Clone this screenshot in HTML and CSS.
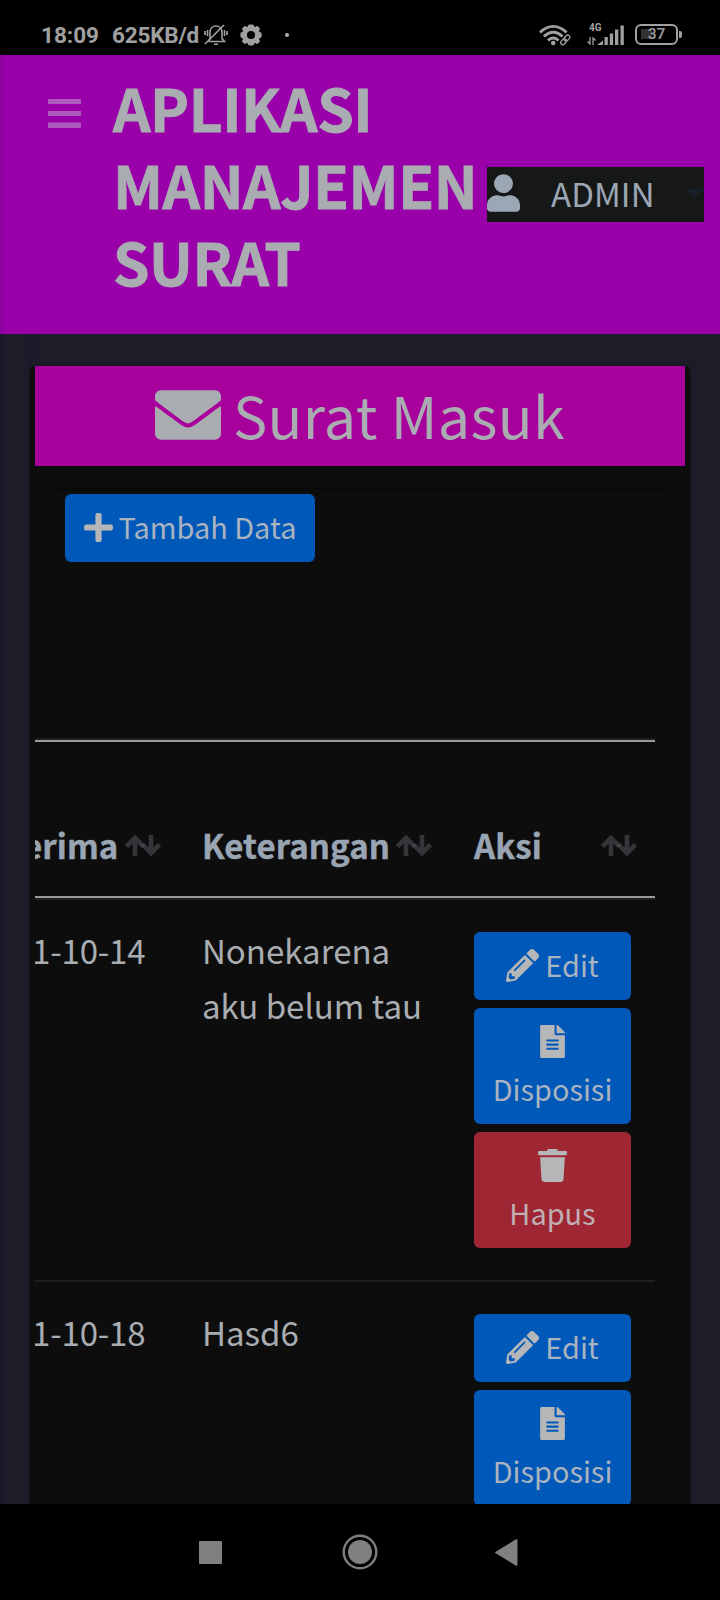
FILE: index.html
```html
<!DOCTYPE html>
<html lang="id">
<head>
<meta charset="utf-8">
<title>Aplikasi Manajemen Surat</title>
<link rel="stylesheet" href="styles.css">
</head>
<body>
<svg class="defs" aria-hidden="true">
  <symbol id="pencil" viewBox="0 0 512 512"><path d="M497.9 142.1l-46.1 46.1c-4.7 4.7-12.3 4.7-17 0l-111-111c-4.7-4.7-4.7-12.3 0-17l46.1-46.1c18.7-18.7 49.1-18.7 67.9 0l60.1 60.1c18.8 18.7 18.8 49.1 0 67.9zM284.2 99.8L21.6 362.4.4 483.9c-2.9 16.4 11.4 30.6 27.8 27.8l121.5-21.3 262.6-262.6c4.7-4.7 4.7-12.3 0-17l-111-111c-4.8-4.7-12.4-4.7-17.1 0zM124.1 339.9c-5.5-5.5-5.5-14.3 0-19.8l154-154c5.5-5.5 14.3-5.5 19.8 0s5.5 14.3 0 19.8l-154 154c-5.5 5.5-14.3 5.5-19.8 0zM88 424h48v36.3l-64.5 11.3-31.1-31.1L51.7 376H88v48z"/></symbol>
  <symbol id="file" viewBox="0 0 384 512"><path d="M224 136V0H24C10.7 0 0 10.7 0 24v464c0 13.3 10.7 24 24 24h336c13.3 0 24-10.7 24-24V160H248c-13.2 0-24-10.8-24-24zm64 236c0 6.600-5.400 12-12 12H108c-6.600 0-12-5.400-12-12v-8c0-6.600 5.400-12 12-12h168c6.600 0 12 5.400 12 12v8zm0-64c0 6.600-5.400 12-12 12H108c-6.600 0-12-5.400-12-12v-8c0-6.600 5.400-12 12-12h168c6.600 0 12 5.400 12 12v8zm0-72v8c0 6.600-5.400 12-12 12H108c-6.600 0-12-5.400-12-12v-8c0-6.600 5.400-12 12-12h168c6.600 0 12 5.400 12 12zm96-114.100v6.100H256V0h6.100c6.400 0 12.500 2.500 17 7l97.900 98c4.500 4.500 7 10.600 7 16.900z"/></symbol>
  <symbol id="trash" viewBox="0 0 448 512"><path d="M432 32H312l-9.4-18.7A24 24 0 0 0 281.100 0H166.800a23.720 23.720 0 0 0-21.400 13.300L136 32H16A16 16 0 0 0 0 48v32a16 16 0 0 0 16 16h416a16 16 0 0 0 16-16V48a16 16 0 0 0-16-16zM32 128l21.200 339a48 48 0 0 0 47.900 45h245.800a48 48 0 0 0 47.900-45L416 128z"/></symbol>
  <symbol id="sort" viewBox="0 0 36 21"><g fill="none" stroke="#333538" stroke-width="4.600"><path d="M10 21V3M1.500 11.500L10 2.800l8.500 8.700"/><path d="M26 0v18M17.500 9.500L26 18.200l8.500-8.700"/></g><circle cx="18" cy="10.500" r="1.500" fill="#4a4d51"/></symbol>
</svg>

<div class="status">
  <span class="clock">18:09</span>
  <span class="speed">625KB/d</span>
  <svg class="bell" width="24" height="24" viewBox="0 0 24 24" fill="none" stroke="#a0a0a0" stroke-width="1.600"><path d="M4.500 18.500h16l-2.500-3V9.500c0-4-2.500-6.500-6-6.500S6 5.500 6 9.500v6l-1.500 3"/><path d="M10 21.300h4M1 21L20 2"/><path d="M1 8v4M3.500 7v6M20.500 7v6M23 8v4"/></svg>
  <svg class="gear" width="22" height="22" viewBox="0 0 22 22"><circle cx="11" cy="11" r="6.600" fill="none" stroke="#a0a0a0" stroke-width="5.200"/><g stroke="#a0a0a0" stroke-width="3.600" stroke-linecap="round"><path d="M9.700 2.200h2.600M9.700 19.800h2.600M2.200 9.700v2.600M19.800 9.700v2.600M4 5l1-1M17 4l1 1M4 17l1 1M17 18l1-1"/></g></svg>
  <span class="dot"></span>
  <span class="grow"></span>
  <svg class="wifi" width="32" height="22" viewBox="0 0 32 22" fill="none" stroke="#a0a0a0" stroke-width="2.900"><path d="M1 8.500C9 .3 19.500.3 27.500 8.500"/><path d="M5 12.500c5.500-5.700 13-5.700 18.500 0"/><path d="M9 16.500c3.300-3.300 7.300-3.300 10.500 0"/><circle cx="14.200" cy="19" r="2.300" fill="#a0a0a0" stroke="none"/><g stroke-width="1.300" transform="rotate(-48 26 16)"><rect x="20.500" y="14" width="6.500" height="4.200" rx="2.100"/><rect x="25.500" y="14" width="6.500" height="4.200" rx="2.100"/></g></svg>
  <svg class="signal" width="38" height="23" viewBox="0 0 38 23"><text x="2" y="7.800" font-family="Roboto" font-weight="700" font-size="10" fill="#a0a0a0">4G</text><path d="M10 22l6-4.500V22zM17.500 14h3.300v8h-3.300zM22.800 10.500h3.300V22h-3.300zM28 6.500h3.300V22H28zM33.500 2.500h3.300V22h-3.300z" fill="#a0a0a0"/><path d="M3 14v7L.5 18.500M6 22v-7l2.500 2.500" fill="none" stroke="#a0a0a0" stroke-width="1.300"/></svg>
  <span class="battery">37</span>
</div>

<header class="topbar">
  <svg class="bars" width="33" height="30" viewBox="0 0 33 30"><path d="M1 0h31a1 1 0 0 1 1 1v4H0V1a1 1 0 0 1 1-1zM0 12h33v5H0zM0 23.500h33v4.500a1 1 0 0 1-1 1H1a1 1 0 0 1-1-1z" fill="#ad5abc"/></svg>
  <h1 class="title">APLIKASI MANAJEMEN SURAT</h1>
  <div class="user">
    <svg width="33" height="38" viewBox="0 0 448 512" fill="#9ca7b6"><path d="M224 256c70.700 0 128-57.300 128-128S294.700 0 224 0 96 57.300 96 128s57.300 128 128 128zm89.600 32h-16.700c-22.200 10.200-46.900 16-72.900 16s-50.600-5.800-72.900-16h-16.700C60.200 288 0 348.200 0 422.400V464c0 26.500 21.500 48 48 48h352c26.500 0 48-21.500 48-48v-41.600c0-74.200-60.200-134.400-134.400-134.400z"/></svg>
    <span class="username">ADMIN</span>
    <span class="caret"></span>
  </div>
</header>

<main class="page">
  <section class="card">
    <h2 class="card-title">
      <svg width="66" height="66" viewBox="0 0 512 512" fill="#a9adb1"><path d="M502.300 190.800c3.900-3.100 9.700-.2 9.700 4.700V400c0 26.500-21.500 48-48 48H48c-26.500 0-48-21.500-48-48V195.600c0-5 5.700-7.800 9.700-4.700 22.400 17.400 52.100 39.500 154.100 113.600 21.100 15.400 56.700 47.800 92.200 47.600 35.700.3 72-32.800 92.300-47.600 102-74.100 131.600-96.300 154-113.700zM256 320c23.200.4 56.600-29.200 73.400-41.400 132.700-96.300 142.800-104.700 173.400-128.700 5.800-4.500 9.200-11.500 9.200-18.900v-19c0-26.500-21.500-48-48-48H48c-26.500 0-48 21.500-48 48v19c0 7.400 3.400 14.300 9.200 18.900 30.600 23.900 40.700 32.400 173.400 128.700 16.800 12.200 50.200 41.800 73.400 41.400z"/></svg>
      <span class="card-text">Surat Masuk</span>
    </h2>
    <hr class="rule">
    <a class="btn add">
      <svg width="29" height="33" viewBox="0 0 448 512"><path d="M416 208H272V64c0-17.670-14.330-32-32-32h-32c-17.670 0-32 14.330-32 32v144H32c-17.670 0-32 14.330-32 32v32c0 17.670 14.330 32 32 32h144v144c0 17.670 14.330 32 32 32h32c17.670 0 32-14.330 32-32V304h144c17.670 0 32-14.330 32-32v-32c0-17.670-14.330-32-32-32z"/></svg>
      <span class="label-add">Tambah Data</span>
    </a>
    <div class="table">
      <div class="row head">
        <div class="cell date"><span class="cut">erima</span><svg class="sort" width="36" height="21"><use href="#sort"/></svg></div>
        <div class="cell"><span class="ket">Keterangan</span><svg class="sort" width="36" height="21"><use href="#sort"/></svg></div>
        <div class="cell"><span class="aksi">Aksi</span><svg class="sort" width="36" height="21"><use href="#sort"/></svg></div>
      </div>
      <div class="row body">
        <div class="cell date">1-10-14</div>
        <div class="cell note">Nonekarena aku belum tau</div>
        <div class="cell actions">
          <a class="btn"><svg width="33" height="33"><use href="#pencil"/></svg><span>Edit</span></a>
          <a class="btn tall"><svg width="25" height="33"><use href="#file"/></svg><span>Disposisi</span></a>
          <a class="btn tall danger"><svg width="29" height="33"><use href="#trash"/></svg><span>Hapus</span></a>
        </div>
      </div>
      <div class="row body">
        <div class="cell date">1-10-18</div>
        <div class="cell note">Hasd6</div>
        <div class="cell actions">
          <a class="btn"><svg width="33" height="33"><use href="#pencil"/></svg><span>Edit</span></a>
          <a class="btn tall"><svg width="25" height="33"><use href="#file"/></svg><span>Disposisi</span></a>
        </div>
      </div>
    </div>
  </section>
</main>

<nav class="navbar">
  <svg width="23" height="23"><rect width="23" height="23" rx="1" fill="#808080"/></svg>
  <svg width="36" height="36" viewBox="0 0 36 36"><circle cx="18" cy="18" r="16.300" fill="none" stroke="#808080" stroke-width="2.400"/><circle cx="18" cy="18" r="12" fill="#808080"/></svg>
  <svg width="23" height="27" viewBox="0 0 23 27"><path d="M21.500 1.200v24.600L1.200 13.500z" fill="#808080" stroke="#808080" stroke-width="2" stroke-linejoin="round"/></svg>
</nav>
</body>
</html>
```

FILE: styles.css
```css
* { box-sizing: border-box; }
body {
  margin: 0;
  width: 720px;
  height: 1600px;
  overflow: hidden;
  display: flex;
  flex-direction: column;
  background: #000;
  color: #a9adb1;
  font-family: "Noto Sans CJK JP", "Noto Sans", sans-serif;
}
svg { display: block; flex: none; }
.defs { position: absolute; width: 0; height: 0; }

/* status bar */
.status {
  height: 55px;
  flex: none;
  display: flex;
  align-items: center;
  padding: 14px 37px 0 41px;
  font: 700 22.500px/40px Roboto, sans-serif;
  color: #a0a0a0;
}
.clock { width: 71px; }
.speed { width: 92px; letter-spacing: -.2px; }
.gear { margin-left: 12px; }
.dot { width: 4px; height: 4px; border-radius: 2px; background: #b0b0b0; margin-left: 23px; }
.grow { flex: 1; }
.signal { margin-left: 16px; }
.battery {
  position: relative;
  width: 43px;
  height: 21px;
  margin: 0 5px 0 10px;
  border: 2.500px solid #a0a0a0;
  border-radius: 6px;
  font-size: 15.500px;
  font-weight: 500;
  line-height: 17px;
  text-align: center;
  background: linear-gradient(#333, #333) 4px 3px / 11px 10px no-repeat;
}
.battery::after {
  content: "";
  position: absolute;
  right: -6px;
  top: 5px;
  width: 3px;
  height: 7px;
  border-radius: 0 2px 2px 0;
  background: #a0a0a0;
}

/* header */
.topbar {
  height: 279px;
  flex: none;
  display: flex;
  align-items: flex-start;
  padding: 13px 0 0 48px;
  background: linear-gradient(90deg, #8a009c, #9900aa 5px);
}
.bars { margin-top: 31px; }
.title {
  margin: 0 0 0 32px;
  width: 374px;
  font-size: 58.600px;
  line-height: 77px;
  font-weight: 700;
  letter-spacing: -.45px;
  -webkit-text-stroke: .9px #a9adb1;
}
.user {
  width: 217px;
  height: 55px;
  margin-top: 99px;
  display: flex;
  align-items: center;
  background: #161817;
  color: #9ca7b6;
}
.user svg { margin-top: -3px; }
.username { margin: -2px 0 0 31px; font-size: 33px; line-height: 55px; letter-spacing: .1px; }
.caret { margin-left: auto; margin-top: -2px; border: 9px solid transparent; border-top-color: #172029; border-bottom: 0; }

/* page */
.page {
  flex: 1;
  min-height: 0;
  overflow: hidden;
  padding: 32px 30px 0;
  background: linear-gradient(90deg, #1b172a, #1e1c29 8px, #1e1c29 22px, #1c182a 30px, #1e1c29 40px);
}
.card {
  height: 1300px;
  padding: 0 5px;
  border-radius: 6px;
  background: #0d0d0d;
  box-shadow: 0 0 3px #111018;
}
.card-title {
  display: flex;
  justify-content: center;
  height: 100px;
  margin: 0;
  background: #a8009b;
  font-size: 57.500px;
  line-height: 97px;
  font-weight: 400;
}
.card-title svg { margin: 16px 12px 0 0; }
.card-text { letter-spacing: .3px; }
.rule { margin: 22px 15px 0; height: 2px; border: 0; background: #0a0a0a; }
.btn {
  display: flex;
  justify-content: center;
  height: 68px;
  padding: 8px 0 12px;
  gap: 6px;
  border-radius: 6px;
  background: #0058b8;
  color: #a9b4c0;
  font-size: 28.900px;
  line-height: 48px;
}
.btn svg { fill: #b5b6b7; margin-top: 8.500px; }
.add { width: 250px; margin: 4px 0 0 30px; }
.tall { height: 116px; flex-direction: column; align-items: center; gap: 0; }
.tall svg { margin-bottom: 6.500px; }
.danger { background: #9e2733; color: #c0b0b4; }

/* table */
.table { width: 620px; margin-top: 176px; border-top: 2px solid #1f2023; overflow: hidden; }
.row { display: grid; grid-template-columns: 167px 272px 181px; font-size: 33px; line-height: 55px; }
.head {
  height: 160px;
  border-top: 2px solid #999c9e;
  border-bottom: 2px solid #1e2022;
  box-shadow: inset 0 -2px #999c9e;
  font-weight: 700;
  color: #9aa5b3;
}
.head .cell { display: flex; padding-top: 76px; letter-spacing: .1px; -webkit-text-stroke: .4px #9aa5b3; }
.sort { margin: 17px 0 0 auto; }
.date { padding-right: 18px; }
.head .date { padding-right: 41px; }
.head .cell:nth-child(2) { padding-right: 42px; }
.head .cell:nth-child(3) { padding-right: 18px; }
.cut { margin-left: -12px; }
.body { height: 382px; border-bottom: 2px solid #1f2023; }
.body .cell { padding-top: 23px; }
.body .date { margin-left: -3px; white-space: nowrap; letter-spacing: -.15px; }
.note { padding-right: 42px; }
.body .actions { display: flex; flex-direction: column; gap: 8px; width: 157px; padding-top: 32px; }

/* navigation bar */
.navbar { height: 96px; flex: none; display: flex; align-items: center; padding-left: 199px; background: #000; }
.navbar svg:nth-child(2) { margin-left: 120px; }
.navbar svg:nth-child(3) { margin-left: 117px; }
```
